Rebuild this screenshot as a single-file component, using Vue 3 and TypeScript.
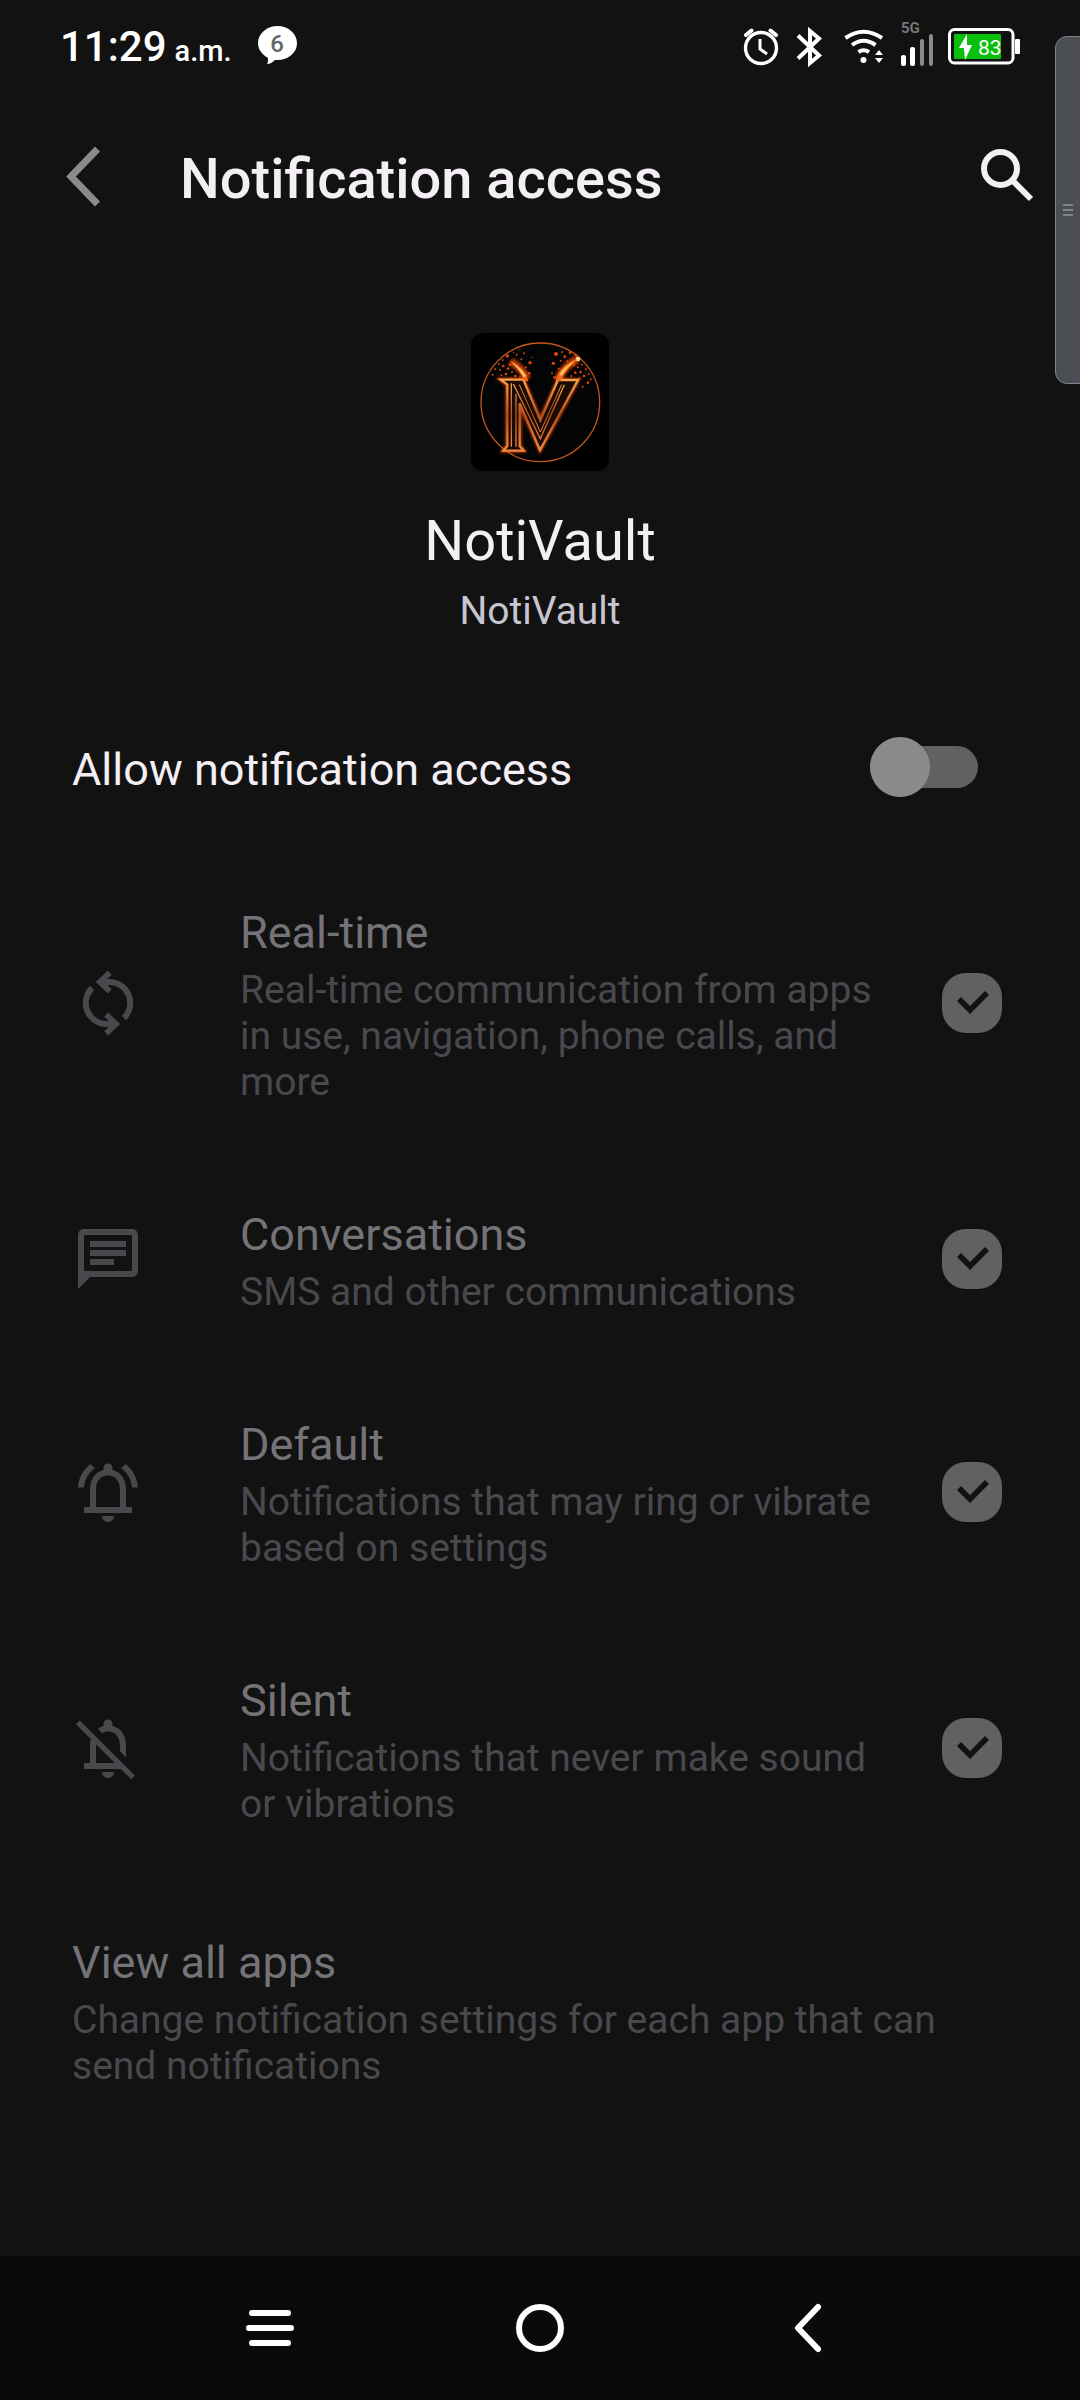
<script setup lang="ts">
import { ref } from 'vue'

interface Category {
  id: string
  title: string
  summary: string
  icon: 'sync' | 'chat' | 'bell' | 'bellOff'
}

const allowed = ref(false)

const categories: Category[] = [
  {
    id: 'realtime',
    title: 'Real-time',
    summary: 'Real-time communication from apps in use, navigation, phone calls, and more',
    icon: 'sync',
  },
  {
    id: 'conversations',
    title: 'Conversations',
    summary: 'SMS and other communications',
    icon: 'chat',
  },
  {
    id: 'default',
    title: 'Default',
    summary: 'Notifications that may ring or vibrate based on settings',
    icon: 'bell',
  },
  {
    id: 'silent',
    title: 'Silent',
    summary: 'Notifications that never make sound or vibrations',
    icon: 'bellOff',
  },
]

// Spark positions of the logo: x, y, radius
const sparks: number[][] = [
  [190, 98, 2], [206, 88, 2], [222, 100, 3], [240, 128, 5], [214, 118, 3], [228, 142, 3],
  [200, 104, 3], [172, 108, 5], [158, 120, 3], [146, 132, 3], [160, 138, 4], [174, 146, 4],
  [150, 150, 3], [136, 148, 3], [128, 164, 3], [168, 162, 4], [186, 156, 3], [196, 168, 4],
  [182, 172, 2], [154, 166, 3], [238, 160, 4], [210, 172, 3], [246, 112, 2], [180, 134, 4],
  [318, 102, 6], [336, 96, 3], [310, 130, 5], [326, 146, 3], [344, 110, 4], [360, 98, 4],
  [352, 124, 3], [306, 160, 3], [314, 172, 4], [372, 134, 4], [384, 142, 3], [396, 134, 3],
  [408, 148, 3], [392, 156, 4], [376, 158, 4], [364, 168, 3], [402, 168, 4], [416, 162, 3],
  [422, 178, 3], [388, 176, 4], [414, 188, 4], [398, 200, 3], [378, 106, 4], [332, 122, 3],
]
</script>

<template>
  <div class="screen">
    <div class="status">
      <div class="clock">
        <span class="time">11:29</span>
        <span class="ampm">a.m.</span>
      </div>
      <svg class="bubble" viewBox="256 26 43 42" width="43" height="42" aria-hidden="true">
        <path fill="#fff" d="M277.500 27C288 27 297 34.300 297 44.200 297 54 288 61 277.500 61c-1.200 0-2 0-3 .3-1.800 2.200-4.500 3.700-7.500 3.700 1-1.600 1.300-4 .8-6.300C262 55.500 258 50.300 258 44.200 258 34.300 267 27 277.500 27z" />
        <text x="277" y="53" text-anchor="middle" font-size="24" font-weight="500" fill="#666">6</text>
      </svg>
      <div class="indicators">
        <svg viewBox="738 10 50 70" width="50" height="70" fill="none" stroke="#fff" aria-hidden="true">
          <circle cx="761" cy="47" r="15.500" stroke-width="3.400" />
          <path d="M760 38v10l7 5" stroke-width="3" />
          <path d="M746 34l5.500-4.500M776 34l-5.500-4.500" stroke-width="4" stroke-linecap="round" />
        </svg>
        <svg viewBox="788 10 50 70" width="50" height="70" fill="none" stroke="#fff" stroke-width="4" aria-hidden="true">
          <path d="M798 34.500l21 20-9 7.500V30l9 7.500-21 20" />
        </svg>
        <svg viewBox="838 10 52 70" width="52" height="70" fill="none" stroke="#fff" stroke-width="4" aria-hidden="true">
          <path d="M845.500 37Q863.500 24.500 882 37M852 44Q863.500 35.500 875.500 44M858.500 51Q863.500 47.500 869 51" />
          <circle cx="863.500" cy="59" r="3" fill="#fff" stroke="none" />
          <path d="M875 54l4-5 4 5zM875 57l4 5 4-5z" fill="#fff" stroke="none" />
        </svg>
        <svg viewBox="890 10 52 70" width="52" height="70" aria-hidden="true">
          <text x="901" y="32" font-size="15" font-weight="700" fill="#777">5G</text>
          <rect x="901" y="54" width="5" height="11" rx="2" fill="#fff" />
          <rect x="910" y="46" width="5" height="19" rx="2" fill="#fff" />
          <rect x="920" y="38" width="4" height="27" rx="2" fill="#8a8a8a" />
          <rect x="929" y="33" width="4" height="32" rx="2" fill="#8a8a8a" />
        </svg>
        <svg viewBox="942 10 80 70" width="80" height="70" aria-hidden="true">
          <rect x="949.500" y="28.500" width="63.500" height="33.500" rx="5" fill="none" stroke="#fff" stroke-width="3" />
          <rect x="1015" y="38" width="5" height="15" rx="1" fill="#fff" />
          <rect x="954" y="33" width="47" height="25" rx="1" fill="#0abf0c" />
          <path d="M967 33l-8 14h5l1 12 7-15h-5z" fill="#fff" />
          <text x="978" y="54" font-size="21" fill="#fff">83</text>
        </svg>
      </div>
    </div>

    <header class="bar">
      <button class="icon-button" type="button" aria-label="Back">
        <svg viewBox="60 140 48 72" width="48" height="72" fill="none" stroke="#8a8a8a" stroke-width="7" aria-hidden="true">
          <path d="M97.500 149L71 176.500l26.500 27.500" />
        </svg>
      </button>
      <h1>Notification access</h1>
      <button class="icon-button" type="button" aria-label="Search">
        <svg viewBox="972 140 72 72" width="72" height="72" fill="none" stroke="#f3eff4" stroke-width="6" aria-hidden="true">
          <circle cx="1000.500" cy="168.500" r="16.500" />
          <path d="M1012 180l19 19" />
        </svg>
      </button>
    </header>

    <main>
      <section class="profile">
        <svg class="logo" viewBox="63 39 414 414" width="138" height="138" role="img" aria-label="NotiVault icon">
          <defs>
            <linearGradient id="metal" x1="0" y1="0" x2="0" y2="1">
              <stop offset="0" stop-color="#f9a04a" />
              <stop offset="0.500" stop-color="#b4501c" />
              <stop offset="1" stop-color="#f08a40" />
            </linearGradient>
            <filter id="glow" x="-20%" y="-20%" width="140%" height="140%">
              <feGaussianBlur stdDeviation="5" />
            </filter>
          </defs>
          <rect x="63" y="39" width="414" height="414" fill="#000" />
          <circle cx="271" cy="247" r="178" fill="#020405" stroke="#c0581c" stroke-width="4" />
          <g fill="none" stroke="#f04a08" stroke-width="11" opacity="0.800" filter="url(#glow)">
            <path d="M152 179h68l51 122 53-121h60L270 390l-61-140v128l12 14h-61l12-14V194z" />
            <path d="M232 178Q216 144 182 124M324 178Q340 140 384 116" stroke-width="24" />
          </g>
          <path d="M152 179h68l51 122 53-121h60L270 390l-61-140v128l12 14h-61l12-14V194z" fill="#1c0b04" stroke="url(#metal)" stroke-width="7" />
          <g fill="none" stroke="url(#metal)" stroke-width="4">
            <path d="M184 190v190M198 222v158M190 192l81 164 72-162" />
            <path d="M208 194l63 142 64-142" stroke-width="3" />
          </g>
          <g fill="#e04408">
            <circle v-for="(s, i) in sparks" :key="i" :cx="s[0]" :cy="s[1]" :r="s[2]" />
          </g>
          <path d="M235 184Q226 144 178 120 210 150 222 182zM316 184Q326 136 387 114 352 142 332 182z" fill="#f4661a" />
          <path d="M229 168Q216 144 184 126 208 148 222 172zM328 164Q340 140 378 120 352 142 334 168z" fill="#ffc05a" />
          <circle cx="384" cy="117" r="7" fill="#ffd08a" />
        </svg>
        <h2>NotiVault</h2>
        <p>NotiVault</p>
      </section>

      <div class="row allow">
        <label class="text title primary" for="allow">Allow notification access</label>
        <input id="allow" v-model="allowed" class="switch" type="checkbox" role="switch" />
      </div>

      <div v-for="c in categories" :key="c.id" class="row">
        <svg class="glyph" viewBox="0 0 24 24" width="72" height="72" aria-hidden="true">
          <template v-if="c.icon === 'sync'">
            <path d="M10 5h2a7 7 0 0 1 5.300 12M14 19h-2A7 7 0 0 1 6.700 7" fill="none" stroke="currentColor" stroke-width="2" />
            <path d="M12.600 1.900L9.300 5l3.300 3.100M11.400 22.100l3.300-3.100-3.300-3.100" fill="none" stroke="currentColor" stroke-width="1.900" />
          </template>
          <path
            v-else-if="c.icon === 'chat'"
            d="M4 4h16v12H4zm0-2c-1.100 0-2 .9-2 2v18l4-4h14c1.100 0 2-.9 2-2V4c0-1.100-.9-2-2-2zm2 10h8v2H6zm0-3h12v2H6zm0-3h12v2H6z"
            fill="currentColor"
            fill-rule="evenodd"
          />
          <g v-else-if="c.icon === 'bell'" fill="currentColor">
            <path fill-rule="evenodd" d="M18 17v-6c0-3.070-1.630-5.640-4.500-6.320V4c0-.83-.67-1.500-1.500-1.500S10.500 3.170 10.500 4v.68C7.640 5.360 6 7.920 6 11v6H4v2h16v-2zM16 17H8v-6c0-2.480 1.510-4.500 4-4.500s4 2.020 4 4.500z" />
            <path d="M12 22c1.100 0 2-.9 2-2h-4c0 1.100.9 2 2 2z" />
            <path d="M7.580 4.080L6.150 2.650C3.750 4.480 2.170 7.300 2.030 10.500h2c.15-2.650 1.510-4.970 3.550-6.420zM19.970 10.500h2c-.15-3.200-1.730-6.020-4.120-7.850l-1.420 1.430c2.020 1.450 3.390 3.770 3.540 6.420z" />
          </g>
          <g v-else fill="currentColor">
            <path d="M10.500 4.680V4c0-.83.67-1.500 1.500-1.500s1.500.67 1.500 1.500v.68C16.370 5.360 18 7.930 18 11v4.100l-2-2V11c0-2.480-1.510-4.500-4-4.500-.7 0-1.400.2-2 .5L8.600 5.600c.5-.4 1.100-.7 1.900-.92z" />
            <path d="M6 17v-6c0-.9.1-1.600.4-2.300L8 10.300V17h7.500l2 2H4v-2z" />
            <path d="M12 22c1.100 0 2-.9 2-2h-4c0 1.100.9 2 2 2z" />
            <path d="M1.950 3.450l18.400 18.350" stroke="currentColor" stroke-width="1.800" />
          </g>
        </svg>
        <label class="text" :for="c.id">
          <span class="title">{{ c.title }}</span>
          <span class="summary">{{ c.summary }}</span>
        </label>
        <input :id="c.id" class="check" type="checkbox" checked disabled />
      </div>

      <div class="row all">
        <div class="text">
          <span class="title">View all apps</span>
          <span class="summary">Change notification settings for each app that can send notifications</span>
        </div>
      </div>
    </main>

    <nav class="nav">
      <button type="button" aria-label="Recent apps">
        <svg viewBox="0 0 60 60" width="60" height="60" fill="none" stroke="#fff" stroke-width="6" stroke-linecap="round" aria-hidden="true">
          <path d="M12 15h36M9 30h42M12 45h36" />
        </svg>
      </button>
      <button type="button" aria-label="Home">
        <svg viewBox="0 0 60 60" width="60" height="60" fill="none" stroke="#fff" stroke-width="6" aria-hidden="true">
          <circle cx="30" cy="30" r="21" />
        </svg>
      </button>
      <button type="button" aria-label="Back">
        <svg viewBox="0 0 60 60" width="60" height="60" fill="none" stroke="#fff" stroke-width="6" stroke-linecap="round" stroke-linejoin="round" aria-hidden="true">
          <path d="M38 9L18 30l20 21" />
        </svg>
      </button>
    </nav>

    <div class="edge" aria-hidden="true"><i></i><i></i><i></i></div>
  </div>
</template>

<style>
body {
  margin: 0;
  background: #121212;
}
</style>

<style scoped>
.screen {
  position: relative;
  display: flex;
  flex-direction: column;
  min-height: 100vh;
  overflow: hidden;
  background: #121212;
  color: #f3eff4;
  font-family: Roboto, 'Noto Sans', sans-serif;
}

h1,
h2,
p {
  margin: 0;
}

svg {
  display: block;
  flex: none;
}

button {
  display: flex;
  align-items: center;
  justify-content: center;
  padding: 0;
  border: 0;
  background: none;
}

.status {
  display: flex;
  align-items: center;
  height: 92px;
  padding: 0 58px 0 60px;
  color: #fff;
}

.clock {
  display: flex;
  align-items: baseline;
  gap: 8px;
  padding-top: 6px;
  font-weight: 500;
  line-height: 48px;
}

.time {
  font-size: 42px;
}

.ampm {
  font-size: 29px;
}

.bubble {
  margin-left: 24px;
}

.indicators {
  display: flex;
  margin-left: auto;
}

.bar {
  display: flex;
  align-items: center;
  height: 168px;
  padding: 0 36px 0 60px;
}

.bar h1 {
  flex: 1;
  padding: 6px 0 0 72px;
  font-size: 56px;
  font-weight: 500;
  line-height: 66px;
}

main {
  flex: 1;
}

.profile {
  display: flex;
  flex-direction: column;
  align-items: center;
  padding: 73px 72px 55px;
}

.logo {
  border-radius: 12px;
}

.profile h2 {
  margin-top: 37px;
  font-size: 56px;
  font-weight: 400;
  line-height: 66px;
}

.profile p {
  margin-top: 14px;
  color: #c8c5d0;
  font-size: 39px;
  line-height: 46px;
}

.row {
  display: flex;
  align-items: center;
  padding: 0 78px 0 72px;
  color: #49484d;
}

.text {
  flex: 1;
  display: flex;
  flex-direction: column;
  gap: 8px;
  padding: 54px 0 49px;
}

.glyph {
  margin-right: 96px;
}

.title {
  color: #757378;
  font-size: 45px;
  line-height: 53px;
}

.title.primary {
  color: #f3eff4;
}

.summary {
  font-size: 39px;
  line-height: 46px;
}

.allow {
  margin-bottom: 7px;
  padding-right: 102px;
}

.all {
  margin-top: 6px;
}

.switch {
  position: relative;
  flex: none;
  appearance: none;
  width: 108px;
  height: 42px;
  margin: 0;
  border-radius: 21px;
  background: #616161;
}

.switch::before {
  content: '';
  position: absolute;
  top: -9px;
  left: 0;
  width: 60px;
  height: 60px;
  border-radius: 50%;
  background: #8a8a8a;
}

.switch:checked::before {
  left: 48px;
}

.check {
  flex: none;
  appearance: none;
  width: 60px;
  height: 60px;
  margin: 0 0 0 48px;
  border-radius: 24px;
  background: #616161;
}

.check:checked::before {
  content: '';
  display: block;
  width: 60px;
  height: 60px;
  background: #121212;
  clip-path: polygon(15px 28px, 28px 41px, 47px 22px, 43px 18px, 28px 33px, 19px 24px);
}

.nav {
  display: flex;
  height: 144px;
  padding: 0 12.5%;
  background: #0a0a0a;
}

.nav button {
  flex: 1;
}

.edge {
  position: absolute;
  top: 36px;
  right: -12px;
  display: flex;
  flex-direction: column;
  justify-content: center;
  gap: 3px;
  box-sizing: border-box;
  width: 37px;
  height: 348px;
  padding-left: 7px;
  border: 1px solid #7c8490;
  border-radius: 12px;
  background: #4b4e52;
}

.edge i {
  width: 10px;
  height: 2px;
  background: #7f8286;
}
</style>
